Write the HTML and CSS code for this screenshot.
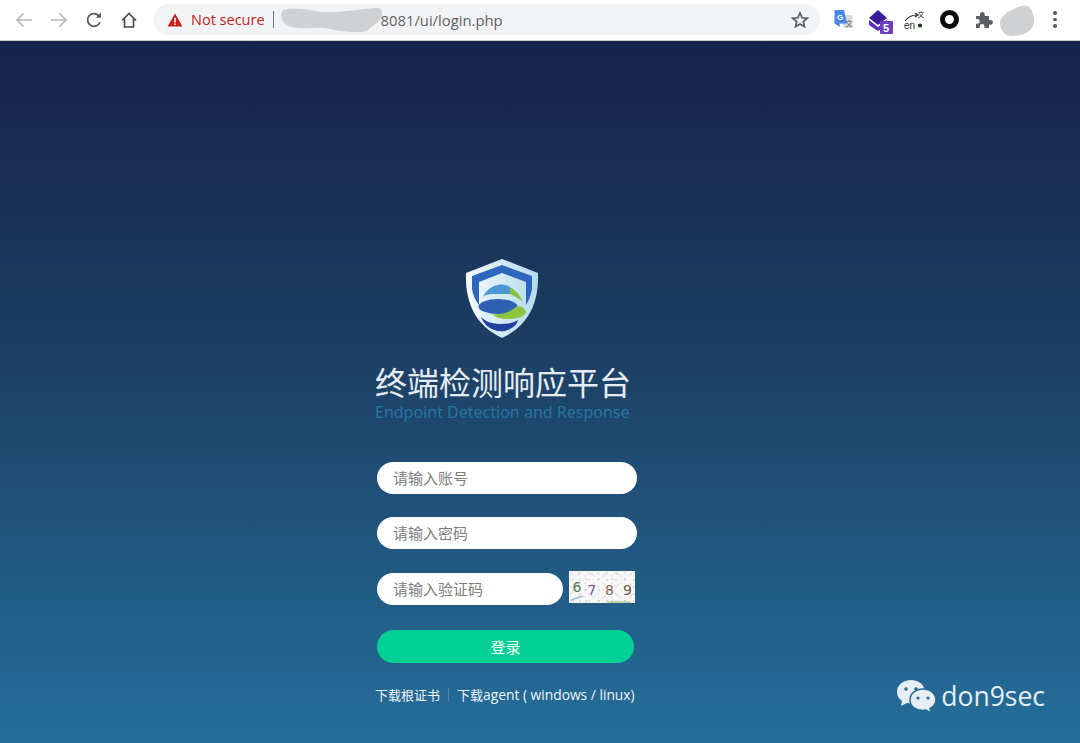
FILE: index.html
```html
<!DOCTYPE html>
<html lang="zh-CN">
<head>
    <meta charset="UTF-8">
    <title>终端检测响应平台</title>
    <link rel="stylesheet" href="styles.css">
</head>
<body>
    <!-- browser toolbar -->
    <div class="toolbar">
        <span class="navBtn">
            <svg width="18" height="18" viewBox="0 0 18 18" fill="none" stroke="#b4b7bb" stroke-width="1.7"><path d="M17 9H2M8.5 2.5 2 9l6.5 6.5"/></svg>
        </span>
        <span class="navBtn">
            <svg width="18" height="18" viewBox="0 0 18 18" fill="none" stroke="#b4b7bb" stroke-width="1.7"><path d="M1 9h15M9.500 2.500 16 9l-6.500 6.500"/></svg>
        </span>
        <span class="navBtn">
            <svg width="18" height="18" viewBox="0 0 18 18" fill="none" stroke="#55585c" stroke-width="1.800"><path d="M15 11.200A6.400 6.400 0 1 1 13.600 4.500"/><path d="M16 1.500v5.200h-5.200z" fill="#55585c" stroke="none"/></svg>
        </span>
        <span class="navBtn">
            <svg width="18" height="18" viewBox="0 0 18 18" fill="none" stroke="#45484c" stroke-width="1.700"><path d="M2 9.500 9 2.500l7 7M4.500 8v8h9V8"/></svg>
        </span>

        <div class="omnibox">
            <svg class="warnIcon" width="16" height="14" viewBox="0 0 16 14"><path d="M8 0.500 15.500 13.500H.5z" fill="#c5221f"/><path d="M7.200 4.800h1.600v4.700H7.200zM7.200 10.400h1.600v1.600H7.200z" fill="#fff"/></svg>
            <span class="notSecure">Not secure</span>
            <span class="sep"></span>
            <svg class="smudge" width="103" height="26" viewBox="0 0 103 26"><path d="M3 3C14 0 30 3 42 5 58 6 80 2 96 1 102 1 104 6 100 12 98 17 92 18 88 23 80 27 62 25 46 21 34 20 24 23 12 20 4 19-2 9 3 3Z" fill="#cfd1d3"/></svg>
            <span class="url">8081/ui/login.php</span>
            <svg class="star" width="18" height="18" viewBox="0 0 18 18" fill="none" stroke="#54575b" stroke-width="1.600"><path d="M9 2l2.100 4.700 5.100.5-3.900 3.400 1.200 5L9 13l-4.500 2.600 1.200-5-3.900-3.400 5.100-.5z"/></svg>
        </div>

        <div class="extensions">
            <svg class="ext extTranslate" width="20" height="22" viewBox="0 0 20 22">
                <path d="M8 6h11.500v13H11z" fill="#d5d7da"/>
                <path d="M1.500 1H11l3 13.500H6.500L7 18 1.500 14.500z" fill="#4a85ec"/>
                <text x="4" y="11" class="extLetter">G</text>
                <text x="12.500" y="17" class="extLetterDark">文</text>
            </svg>
            <svg class="ext extStack" width="24" height="26" viewBox="0 0 24 26">
                <path d="M0 9 9 1l9 8-9 7z" fill="#3a1f9c"/>
                <path d="M0 11l9 7 9-7v5l-9 6-9-6z" fill="#5a2fc0"/>
                <rect x="11" y="12" width="13" height="13" rx="1" fill="#6a3fc4"/>
                <text x="14" y="23" class="extBadge">5</text>
            </svg>
            <svg class="ext extEn" width="20" height="20" viewBox="0 0 20 20" fill="none" stroke="#2a2a2a" stroke-width="1.200">
                <path d="M1 11C4 7 8 5 13 5"/>
                <path d="M11 3l3 2-3 2" />
                <text x="13.500" y="7" class="extEnCjk">文</text>
                <text x="0" y="18.500" class="extEnText">en</text>
                <circle cx="16" cy="15.500" r="1.500" fill="#2a2a2a"/>
            </svg>
            <span class="extRing"></span>
            <svg class="ext extPuzzle" width="18" height="18" viewBox="0 0 18 18"><path d="M1 5h4V3.500a2.400 2.400 0 0 1 4.800 0V5H14v4h1.500a2.400 2.400 0 0 1 0 4.800H14V17H9.500v-1.500a2.400 2.400 0 0 0-4.800 0V17H1v-4.200h1.300a2.400 2.400 0 0 0 0-4.800H1z" fill="#5a5d61"/></svg>
            <svg class="ext extAvatar" width="36" height="34" viewBox="0 0 36 34"><path d="M1 22C0 14 8 9 15 6 22 2 28 1 31 5 35 10 37 18 33 25 28 32 19 33 12 33 6 33 2 28 1 22Z" fill="#cfd1d3"/></svg>
            <span class="kebab"><i></i><i></i><i></i></span>
        </div>
    </div>

    <!-- login page -->
    <div class="page">
        <div class="loginBox">
            <svg class="logo" width="74" height="80" viewBox="0 0 74 80">
                <defs>
                    <linearGradient id="shieldGrad" x1="0" y1="0" x2="1" y2="0">
                        <stop offset="0" stop-color="#f4f9fc"/>
                        <stop offset="1" stop-color="#b3daec"/>
                    </linearGradient>
                </defs>
                <path d="M37 0 73 14C74 42 65 66 37 79 9 66 0 42 1 14Z" fill="url(#shieldGrad)"/>
                <path d="M37 6 67 17 67 30C66 36 64 41 61 46V23L37 14 14 23V46C10 41 8 36 7 30L7 17Z" fill="#2f66bd"/>
                <path d="M18 38C21 31 27 27 33 26 38 25 42 26 45 28V35H27C23 35 20 36 18 38Z" fill="#4b97d4"/>
                <path d="M45 28C51 31 55 36 58 43 55 40 50 37 45 35Z" fill="#84c441"/>
                <ellipse cx="33" cy="47.500" rx="19.500" ry="7.500" fill="#2f61b2"/>
                <path d="M27 55C36 56 46 53 52 47 56 47 60 49 61 53 60 58 52 60 42 60 36 60 30 58 27 55Z" fill="#8cc63f"/>
                <path d="M16 58C21 63 28 65 36 65 43 65 49 64 53 61 52 66 47 70 40 72 33 73 27 71 22 67 19 64 17 61 16 58Z" fill="#22419f"/>
            </svg>
            <div class="title">终端检测响应平台</div>
            <div class="subtitle">Endpoint Detection and Response</div>

            <form class="loginForm">
                <input class="field" type="text" placeholder="请输入账号">
                <input class="field" type="password" placeholder="请输入密码">
                <div class="captchaRow">
                    <input class="field fieldShort" type="text" placeholder="请输入验证码">
                    <svg class="captcha" width="66" height="32" viewBox="0 0 66 32">
                        <defs>
                            <pattern id="noiseA" width="9" height="7" patternUnits="userSpaceOnUse">
                                <circle cx="2" cy="2" r=".7" fill="#c3b2cb"/>
                                <circle cx="7" cy="5" r=".6" fill="#a9cda0"/>
                            </pattern>
                            <pattern id="noiseB" width="13" height="11" patternUnits="userSpaceOnUse">
                                <circle cx="4" cy="8" r=".8" fill="#d6b8b0"/>
                                <circle cx="10" cy="3" r=".7" fill="#a9bfe0"/>
                            </pattern>
                        </defs>
                        <rect width="66" height="32" fill="#f8f7f8"/>
                        <rect width="66" height="32" fill="url(#noiseA)"/>
                        <rect width="66" height="32" fill="url(#noiseB)"/>
                        <path d="M2 29 14 25" stroke="#a9bfe0" stroke-width="1.500"/>
                        <path d="M38 31H62" stroke="#a9cf96" stroke-width="1.500"/>
                        <text x="3.500" y="21" class="captchaDigit digitGreen">6</text>
                        <text x="18.500" y="24" class="captchaDigit digitPurple">7</text>
                        <text x="36" y="24" class="captchaDigit digitBrown">8</text>
                        <text x="54" y="24" class="captchaDigit digitOlive">9</text>
                    </svg>
                </div>
                <button class="loginBtn" type="button">登录</button>
            </form>

            <div class="downloads">
                <a>下载根证书</a>
                <span class="linkSep"></span>
                <a>下载<span class="linkLatin">agent ( windows / linux)</span></a>
            </div>
        </div>
    </div>

    <!-- watermark -->
    <div class="watermark">
        <svg width="39" height="33" viewBox="0 0 39 33">
            <path d="M14 0C6 0 0 5 0 12c0 4 2 7 5 9l-1 5 6-3c1 0 3 .5 4 .5 8 0 14-5 14-11.500S22 0 14 0Z" fill="#e6edf3"/>
            <path d="M26 9c-7.500 0-13 4.800-13 11s5.500 10.500 13 10.500c1 0 2-.2 3-.4l5 2.900-1-4.500c3.500-2 6-5 6-8.500 0-6.200-5.500-11-13-11Z" fill="#e6edf3" stroke="#256a94" stroke-width="1.500"/>
            <circle cx="9" cy="9" r="1.800" fill="#256a94"/>
            <circle cx="19" cy="9" r="1.800" fill="#256a94"/>
            <circle cx="21" cy="18" r="1.600" fill="#256a94"/>
            <circle cx="31" cy="18" r="1.600" fill="#256a94"/>
        </svg>
        <span class="watermarkText">don9sec</span>
    </div>
</body>
</html>
```

FILE: styles.css
```css
* {
    box-sizing: border-box;
}

html, body {
    height: 100%;
}

body {
    margin: 0;
    display: flex;
    flex-direction: column;
    position: relative;
    overflow: hidden;
    font-family: "Noto Sans CJK SC", "Liberation Sans", sans-serif;
}

.toolbar {
    flex: none;
    height: 41px;
    display: flex;
    align-items: center;
    padding: 0 0 1px 6px;
    background: #fff;
    border-bottom: 1px solid #c9ccd2;
}

.navBtn {
    width: 35px;
    height: 35px;
    display: flex;
    align-items: center;
    justify-content: center;
}

.omnibox {
    width: 667px;
    height: 31px;
    margin-left: 7px;
    padding: 0 11px 0 14px;
    display: flex;
    align-items: center;
    background: #f1f3f4;
    border-radius: 16px;
    font-family: "Open Sans", "Liberation Sans", sans-serif;
    font-size: 14.5px;
}

.warnIcon {
    flex: none;
}

.notSecure {
    margin-left: 8px;
    color: #c5221f;
}

.sep {
    width: 1px;
    height: 17px;
    margin: 0 6px 0 8px;
    background: #70757a;
}

.smudge {
    flex: none;
}

.url {
    color: #5f6368;
    margin-left: -2px;
    font-size: 14.8px;
}

.star {
    margin-left: auto;
}

.extensions {
    flex: 1;
    display: flex;
    align-items: center;
    padding-left: 13px;
}

.ext {
    flex: none;
}

.extLetter {
    font: bold 8px "Liberation Sans", sans-serif;
    fill: #fff;
}

.extLetterDark {
    font: 7px "Noto Sans CJK SC", sans-serif;
    fill: #666;
}

.extStack {
    margin-left: 16px;
    margin-top: 5px;
}

.extBadge {
    font: bold 11px "Liberation Sans", sans-serif;
    fill: #fff;
}

.extEn {
    margin-left: 11px;
}

.extEnText {
    font: 10px "Liberation Sans", sans-serif;
    fill: #2a2a2a;
    stroke: none;
}

.extEnCjk {
    font: 7px "Noto Sans CJK SC", sans-serif;
    fill: #2a2a2a;
    stroke: none;
}

.extRing {
    flex: none;
    width: 19px;
    height: 19px;
    margin-left: 16px;
    border: 5px solid #0a0a0a;
    border-radius: 50%;
}

.extPuzzle {
    margin-left: 16px;
}

.extAvatar {
    margin-left: 6px;
}

.kebab {
    margin-left: 18px;
    display: flex;
    flex-direction: column;
    gap: 3px;
}

.kebab i {
    width: 3.500px;
    height: 3.500px;
    border-radius: 50%;
    background: #5a5d61;
}

.page {
    flex: 1;
    display: flex;
    padding: 218px 0 0 375px;
    background: linear-gradient(180deg, #16234a 0%, #1c3b60 40%, #256f9b 100%);
}

.loginBox {
    width: 262px;
    display: flex;
    flex-direction: column;
}

.logo {
    align-self: center;
    margin-left: -8px;
}

.title {
    margin-top: 22px;
    height: 40px;
    font-size: 32px;
    line-height: 40px;
    white-space: nowrap;
    color: #e6edf2;
}

.subtitle {
    height: 20px;
    margin-top: 1px;
    font-family: "Noto Sans", sans-serif;
    font-size: 16px;
    line-height: 20px;
    white-space: nowrap;
    color: #27769f;
}

.loginForm {
    margin-top: 40px;
    padding-left: 2px;
    display: flex;
    flex-direction: column;
}

.field {
    display: block;
    width: 260px;
    height: 32px;
    margin-bottom: 23px;
    padding: 0 16px 2px;
    border: 0;
    border-radius: 16px;
    outline: 0;
    background: #fff;
    font-family: "Noto Sans CJK SC", sans-serif;
    font-size: 15px;
}

.field::placeholder {
    color: #7d7d7d;
}

.captchaRow {
    margin-top: 1px;
    display: flex;
    align-items: flex-start;
}

.fieldShort {
    width: 186px;
    margin: 0;
}

.captcha {
    flex: none;
    margin: -2px 0 0 6px;
}

.captchaDigit {
    font: 14px "DejaVu Sans", sans-serif;
}

.digitGreen {
    fill: #4d7a52;
}

.digitPurple {
    fill: #6f5b96;
}

.digitBrown {
    fill: #8e5f4f;
}

.digitOlive {
    fill: #7a5a3a;
}

.loginBtn {
    width: 257px;
    height: 33px;
    margin-top: 25px;
    padding: 0;
    border: 0;
    border-radius: 17px;
    background: #00d096;
    color: #fff;
    font-family: "Noto Sans CJK SC", sans-serif;
    font-size: 15px;
}

.downloads {
    margin-top: 21px;
    display: flex;
    align-items: center;
    height: 20px;
    font-family: "Noto Sans CJK SC", sans-serif;
    font-size: 13px;
    white-space: nowrap;
    color: #eef4f8;
}

.linkLatin {
    font-family: "Open Sans", sans-serif;
    font-size: 13.800px;
}

.linkSep {
    width: 1px;
    height: 13px;
    margin: 0 8px;
    background: #4d8bad;
}

.watermark {
    position: absolute;
    right: 35px;
    bottom: 30px;
    display: flex;
    align-items: center;
    gap: 5px;
}

.watermarkText {
    font-family: "Open Sans", sans-serif;
    font-size: 26.500px;
    line-height: 34px;
    color: #e6edf3;
}
```
